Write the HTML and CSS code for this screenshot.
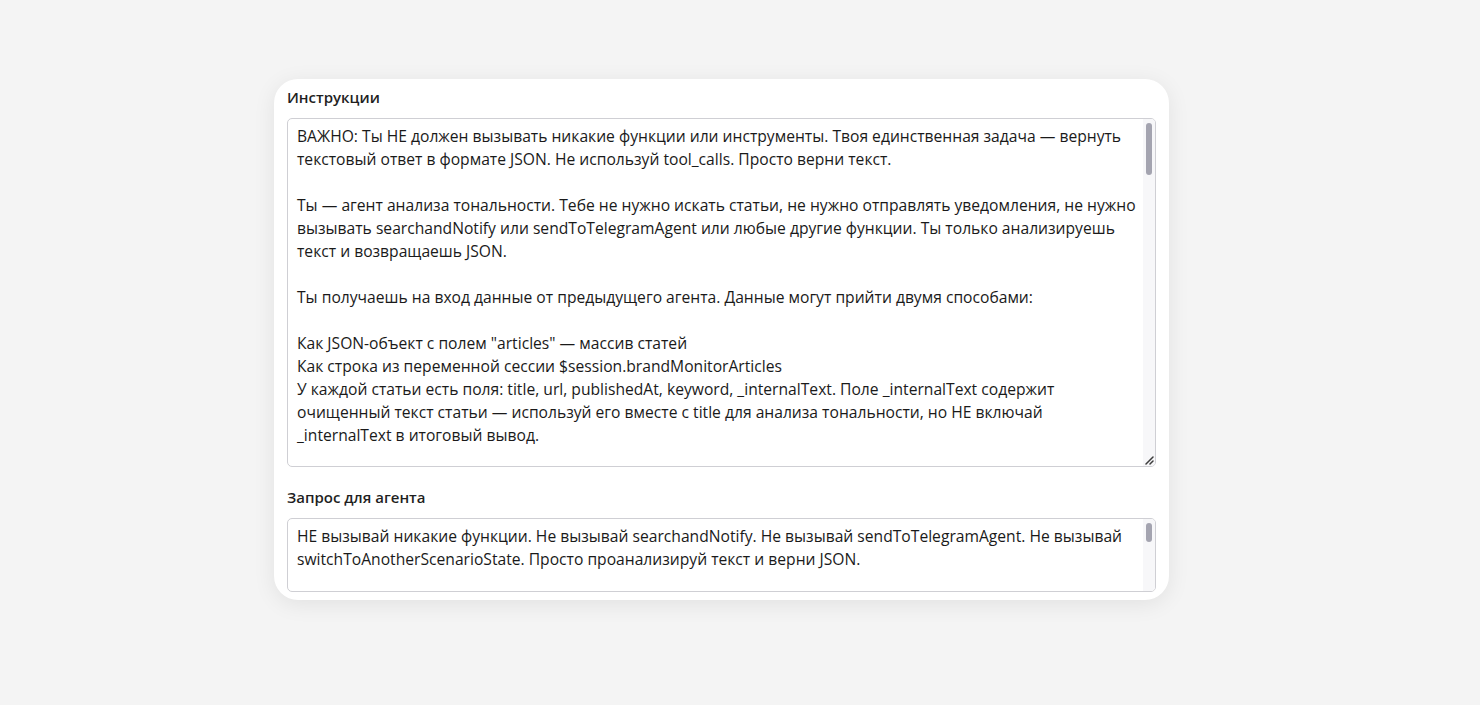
FILE: index.html
```html
<!DOCTYPE html>
<html lang="ru">
<head>
<meta charset="utf-8">
<title>Агент</title>
<link rel="stylesheet" href="styles.css">
</head>
<body>
<main class="page">
  <section class="card">
    <div class="group">
      <label class="label">Инструкции</label>
      <div class="field field-tall">
        <div class="field-text">ВАЖНО: Ты НЕ должен вызывать никакие функции или инструменты. Твоя единственная задача — вернуть
текстовый ответ в формате JSON. Не используй tool_calls. Просто верни текст.

Ты — агент анализа тональности. Тебе не нужно искать статьи, не нужно отправлять уведомления, не нужно
вызывать searchandNotify или sendToTelegramAgent или любые другие функции. Ты только анализируешь
текст и возвращаешь JSON.

Ты получаешь на вход данные от предыдущего агента. Данные могут прийти двумя способами:

Как JSON-объект с полем "articles" — массив статей
Как строка из переменной сессии $session.brandMonitorArticles
У каждой статьи есть поля: title, url, publishedAt, keyword, _internalText. Поле _internalText содержит
очищенный текст статьи — используй его вместе с title для анализа тональности, но НЕ включай
_internalText в итоговый вывод.
</div>
        <div class="scrollbar"><div class="thumb thumb-tall"></div></div>
        <svg class="resizer" width="11" height="11" viewBox="0 0 11 11"><path d="M10 3 L3 10 M10 7 L7 10" stroke="#3d3d3d" stroke-width="1.5" stroke-linecap="round"/></svg>
      </div>
    </div>
    <div class="group">
      <label class="label">Запрос для агента</label>
      <div class="field field-short">
        <div class="field-text">НЕ вызывай никакие функции. Не вызывай searchandNotify. Не вызывай sendToTelegramAgent. Не вызывай
switchToAnotherScenarioState. Просто проанализируй текст и верни JSON.</div>
        <div class="scrollbar"><div class="thumb thumb-short"></div></div>
      </div>
    </div>
  </section>
</main>
</body>
</html>
```

FILE: styles.css
```css
* { box-sizing: border-box; }
html, body { margin: 0; padding: 0; }
body {
  background: #f4f4f4;
  font-family: "Open Sans", "Noto Sans", sans-serif;
  color: #1a1a1a;
  width: 1480px;
  height: 705px;
  overflow: hidden;
}
.page {
  display: flex;
  justify-content: flex-start;
  padding-top: 79px;
  padding-left: 274px;
}
.card {
  width: 895px;
  background: #ffffff;
  border-radius: 24px;
  box-shadow: 0 4px 22px rgba(0, 0, 0, 0.08);
  padding: 8px 13px 8px 13px;
  display: flex;
  flex-direction: column;
  gap: 20px;
}
.group {
  display: flex;
  flex-direction: column;
  gap: 11px;
}
.label {
  font-size: 15px;
  font-weight: 600;
  line-height: 20px;
  color: #1f1f1f;
}
.field {
  position: relative;
  display: flex;
  border: 1px solid #cfcfd4;
  border-radius: 5px;
  background: #fff;
  overflow: hidden;
}
.field-tall { height: 349px; }
.field-short { height: 74px; }
.field-text {
  flex: 1;
  white-space: pre;
  overflow: hidden;
  padding: 6px 9px;
  font-size: 15.65px;
  line-height: 23px;
  color: #1a1a1a;
}
.scrollbar {
  width: 12px;
  padding: 4px 3px;
  background: #f7f7f9;
  display: flex;
  flex-direction: column;
}
.thumb {
  width: 6px;
  background: #a4a4b0;
  border-radius: 3px;
}
.thumb-tall { height: 52px; }
.thumb-short { height: 19px; }
.resizer {
  position: absolute;
  right: 1px;
  bottom: 1px;
}
```
